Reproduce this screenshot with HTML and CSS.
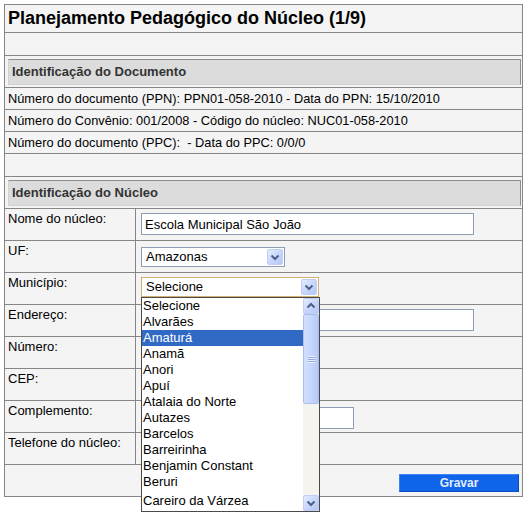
FILE: index.html
```html
<!DOCTYPE html>
<html lang="pt-BR">
<head>
<meta charset="utf-8">
<title>Planejamento Pedagógico do Núcleo</title>
<link rel="stylesheet" href="styles.css">
</head>
<body>
<div class="ppn">
  <div class="cell full title">Planejamento Pedagógico do Núcleo (1/9)</div>
  <div class="cell full empty"></div>
  <div class="cell full sect"><div class="sect-box">Identificação do Documento</div></div>
  <div class="cell full info">Número do documento (PPN): PPN01-058-2010 - Data do PPN: 15/10/2010</div>
  <div class="cell full info">Número do Convênio: 001/2008 - Código do núcleo: NUC01-058-2010</div>
  <div class="cell full info">Número do documento (PPC):&nbsp; - Data do PPC: 0/0/0</div>
  <div class="cell full empty"></div>
  <div class="cell full sect"><div class="sect-box">Identificação do Núcleo</div></div>

  <div class="cell lbl">Nome do núcleo:</div>
  <div class="cell fld"><input class="txt txt-long" type="text" value="Escola Municipal São João"></div>

  <div class="cell lbl">UF:</div>
  <div class="cell fld fld-low">
    <div class="combo combo-uf">
      <span class="combo-val">Amazonas</span>
      <span class="sbtn"><svg width="16" height="17" viewBox="0 0 16 17"><path d="M4.5 6.5 L8 10 L11.5 6.5" fill="none" stroke="#4d6185" stroke-width="2"/></svg></span>
    </div>
  </div>

  <div class="cell lbl">Município:</div>
  <div class="cell fld">
    <div class="combo-wrap">
      <div class="combo combo-mun">
        <span class="combo-val">Selecione</span>
        <span class="sbtn"><svg width="16" height="17" viewBox="0 0 16 17"><path d="M4.5 6.5 L8 10 L11.5 6.5" fill="none" stroke="#4d6185" stroke-width="2"/></svg></span>
      </div>
      <div class="droplist">
        <ul class="opts">
          <li>Selecione</li>
          <li>Alvarães</li>
          <li class="hl">Amaturá</li>
          <li>Anamã</li>
          <li>Anori</li>
          <li>Apuí</li>
          <li>Atalaia do Norte</li>
          <li>Autazes</li>
          <li>Barcelos</li>
          <li>Barreirinha</li>
          <li>Benjamin Constant</li>
          <li>Beruri</li>
          <li class="last">Careiro da Várzea</li>
        </ul>
        <div class="vscroll">
          <span class="sbtn sbtn-sq"><svg width="16" height="16" viewBox="0 0 16 16"><path d="M4.5 9.5 L8 6 L11.5 9.5" fill="none" stroke="#4d6185" stroke-width="2"/></svg></span>
          <div class="thumb"><span class="grip"></span></div>
          <div class="track"></div>
          <span class="sbtn sbtn-sq"><svg width="16" height="16" viewBox="0 0 16 16"><path d="M4.5 6.5 L8 10 L11.5 6.5" fill="none" stroke="#4d6185" stroke-width="2"/></svg></span>
        </div>
      </div>
    </div>
  </div>

  <div class="cell lbl">Endereço:</div>
  <div class="cell fld"><input class="txt txt-long" type="text"></div>

  <div class="cell lbl">Número:</div>
  <div class="cell fld"><input class="txt txt-short" type="text"></div>

  <div class="cell lbl">CEP:</div>
  <div class="cell fld"><input class="txt txt-short" type="text"></div>

  <div class="cell lbl">Complemento:</div>
  <div class="cell fld fld-low"><input class="txt txt-mid" type="text"></div>

  <div class="cell lbl">Telefone do núcleo:</div>
  <div class="cell fld"><input class="txt txt-short" type="text"></div>

  <div class="cell full foot"><button class="btn" type="button">Gravar</button></div>
</div>
</body>
</html>
```

FILE: styles.css
```css
* {
  box-sizing: border-box;
}

html {
  min-height: 514px;
}

body {
  min-height: 514px;
  margin: 0;
  padding: 4px;
  background: #ffffff;
  font-family: "Liberation Sans", Arial, sans-serif;
  font-size: 13px;
  color: #000000;
}

.ppn {
  width: 519px;
  display: grid;
  grid-template-columns: 131px 1fr;
  border: 1px solid #868686;
  border-bottom: 0;
  background: #f4f4f4;
}

.cell {
  border-bottom: 1px solid #868686;
  line-height: 15px;
}

.full {
  grid-column: 1 / -1;
}

.title {
  height: 28px;
  padding-left: 3px;
  font-size: 18px;
  font-weight: bold;
  line-height: 27px;
}

.empty {
  height: 23px;
}

.sect {
  height: 32px;
  padding: 3px 1px 2px 3px;
}

.sect-box {
  height: 26px;
  padding-left: 3px;
  background: #dcdcdc;
  border: 1px solid;
  border-color: #8e8e8e #8e8e8e #d2d2d2 #d2d2d2;
  color: #333333;
  font-weight: bold;
  line-height: 24px;
}

.info {
  height: 22px;
  padding-left: 3px;
  font-size: 12.8px;
  line-height: 21px;
}

.lbl {
  height: 32px;
  padding: 2px 0 0 3px;
  border-right: 1px solid #868686;
}

.fld {
  height: 32px;
  padding: 4px 0 0 5px;
}

.fld-low {
  padding-top: 6px;
}

.txt {
  display: block;
  height: 22px;
  margin: 0;
  padding: 0 3px;
  border: 1px solid #8d9db3;
  background: #ffffff;
  font-family: "Liberation Sans", Arial, sans-serif;
  font-size: 13px;
  color: #000000;
  outline: none;
}

.txt-long {
  width: 333px;
}

.txt-mid {
  width: 213px;
}

.txt-short {
  width: 110px;
}

.combo {
  display: flex;
  align-items: center;
  height: 20px;
  padding: 1px;
  border: 1px solid #8d9db3;
  background: #ffffff;
}

.combo-uf {
  width: 144px;
}

.combo-mun {
  width: 178px;
  border-color: #d2b274;
}

.combo-val {
  flex: 1;
  padding-left: 3px;
  line-height: 16px;
}

.sbtn {
  display: block;
  width: 16px;
  height: 16px;
  border: 1px solid #c0cef5;
  border-radius: 2px;
  background: linear-gradient(135deg, #e4ecff 0%, #c6d5fb 55%, #b5c8f6 100%);
}

.sbtn svg {
  display: block;
  margin: -1px;
}

.combo-wrap {
  position: relative;
  width: 178px;
}

.droplist {
  position: absolute;
  top: 100%;
  left: 0;
  z-index: 5;
  display: flex;
  width: 179px;
  height: 215px;
  border: 1px solid #4a4a4a;
  background: #ffffff;
  overflow: hidden;
}

.opts {
  flex: 1;
  margin: 0;
  padding: 0;
  list-style: none;
}

.opts li {
  height: 16px;
  padding-left: 1px;
  font-size: 13px;
  line-height: 16px;
  white-space: nowrap;
}

.opts li.hl {
  background: #316ac5;
  color: #ffffff;
}

.opts li.last {
  margin-top: 3px;
}

.vscroll {
  display: flex;
  flex-direction: column;
  flex: none;
  width: 16px;
  height: 100%;
  background: #f5f4ef;
}

.sbtn-sq {
  flex: none;
}

.thumb {
  display: flex;
  align-items: center;
  justify-content: center;
  flex: none;
  height: 90px;
  border: 1px solid #a9bdf0;
  border-radius: 2px;
  background: linear-gradient(90deg, #d3dffd 0%, #c4d4fb 60%, #b6c9f6 100%);
}

.grip {
  display: block;
  width: 7px;
  height: 7px;
  background: repeating-linear-gradient(180deg, #eef3ff 0 1px, #8ea6e4 1px 2px);
}

.track {
  flex: 1;
}

.foot {
  height: 32px;
  display: flex;
  justify-content: flex-end;
  padding: 9px 3px 0 0;
}

.btn {
  width: 120px;
  height: 18px;
  margin: 0;
  padding: 0;
  border: 1px solid;
  border-color: #3d84f2 #0b4cc2 #0b4cc2 #3d84f2;
  background: #1064ea;
  color: #e4eeff;
  font-family: "Liberation Sans", Arial, sans-serif;
  font-size: 12px;
  font-weight: bold;
  line-height: 16px;
}
```
